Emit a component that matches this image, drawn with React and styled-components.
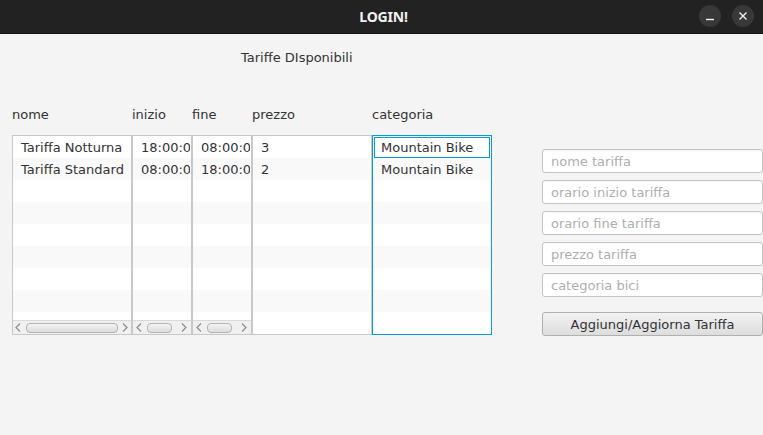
import React from 'react'
import styled, { createGlobalStyle } from 'styled-components'

const GlobalStyle = createGlobalStyle`
  html, body {
    margin: 0;
    padding: 0;
    background: #f4f4f4;
  }
  body {
    width: 763px;
    height: 435px;
    overflow: hidden;
    font-family: "DejaVu Sans", "Liberation Sans", sans-serif;
    font-size: 13px;
    color: #333333;
  }
`

const TitleBar = styled.div`
  position: relative;
  height: 33px;
  background: #222222;
  border-bottom: 1px solid #141414;
  display: flex;
  align-items: center;
  justify-content: center;
`

const TitleText = styled.div`
  color: #f2f2f2;
  font-family: "Noto Sans", "Liberation Sans", sans-serif;
  font-weight: 700;
  font-size: 14px;
  letter-spacing: -0.2px;
  margin-left: 4px;
`

const WinButtons = styled.div`
  position: absolute;
  right: 9px;
  top: 5px;
  display: flex;
  gap: 11px;
`

const WinButton = styled.div`
  width: 22px;
  height: 22px;
  border-radius: 50%;
  background: #383838;
  display: flex;
  align-items: center;
  justify-content: center;
`

const Content = styled.div`
  display: flex;
  padding-left: 12px;
`

const LeftPane = styled.div`
  width: 480px;
  display: flex;
  flex-direction: column;
`

const PaneTitle = styled.div`
  margin-top: 16px;
  padding-left: 229px;
  line-height: 16px;
`

const Columns = styled.div`
  display: flex;
  margin-top: 41px;
`

const Column = styled.div`
  width: ${p => p.$w}px;
  display: flex;
  flex-direction: column;
`

const Header = styled.div`
  line-height: 16px;
  height: 16px;
  margin-bottom: 12px;
`

const List = styled.div`
  height: 200px;
  box-sizing: border-box;
  background: #ffffff;
  border: 1px solid ${p => (p.$focused ? '#039ed3' : '#c8c8c8')};
  box-shadow: ${p => (p.$focused ? '0 0 0 1px rgba(3,158,211,0.35) inset' : 'none')};
  display: flex;
  flex-direction: column;
  overflow: hidden;
`

const Rows = styled.div`
  flex: 1;
  overflow: hidden;
  background: repeating-linear-gradient(
    to bottom,
    #ffffff 0px,
    #ffffff 22px,
    #f9f9f9 22px,
    #f9f9f9 44px
  );
`

const Cell = styled.div`
  box-sizing: border-box;
  white-space: nowrap;
  overflow: hidden;
  color: #333333;
  height: ${p => (p.$focused ? '21px' : '22px')};
  margin: ${p => (p.$focused ? '1px 1px 0 1px' : '0')};
  border: 1px solid ${p => (p.$focused ? '#039ed3' : 'transparent')};
  padding: ${p => (p.$focused ? '0 6px' : '1px 7px 0')};
  line-height: 19px;
`

const HScroll = styled.div`
  height: 14px;
  flex: none;
  border-top: 1px solid #dadada;
  background: #f0f0f0;
  display: flex;
  align-items: center;
  padding: 0 3px 0 2px;
  box-sizing: border-box;
`

const Arrow = styled.div`
  width: 8px;
  display: flex;
  align-items: center;
  justify-content: center;
`

const Track = styled.div`
  flex: 1;
  padding: 0 ${p => p.$pad}px 0 4px;
  display: flex;
`

const Thumb = styled.div`
  height: 10px;
  box-sizing: border-box;
  width: ${p => p.$w}px;
  border: 1px solid #b4b4b4;
  border-radius: 4px;
  background: linear-gradient(#f4f4f4, #dcdcdc);
`

const RightPane = styled.div`
  margin-left: 50px;
  padding-top: 115px;
  display: flex;
  flex-direction: column;
  gap: 7px;
`

const Field = styled.input`
  width: 221px;
  height: 24px;
  box-sizing: border-box;
  border: 1px solid #c4c4c4;
  border-radius: 3px;
  background: #ffffff;
  padding: 0 8px;
  font-family: "DejaVu Sans", "Liberation Sans", sans-serif;
  font-size: 13px;
  color: #333333;
  outline: none;
  box-shadow: inset 0 1px 1px rgba(0, 0, 0, 0.04);
  &::placeholder {
    color: #aeaeae;
  }
`

const ActionButton = styled.button`
  margin-top: 8px;
  width: 221px;
  height: 24px;
  box-sizing: border-box;
  border: 1px solid #b0b0b0;
  border-radius: 3px;
  background: linear-gradient(#f2f2f2, #dddddd);
  font-family: "DejaVu Sans", "Liberation Sans", sans-serif;
  font-size: 13px;
  color: #333333;
  padding: 0;
`

const Chevron = ({ left }) => (
  <svg width="6" height="9" viewBox="0 0 6 9">
    <path
      d={left ? 'M5 0.5 L1 4.5 L5 8.5' : 'M1 0.5 L5 4.5 L1 8.5'}
      stroke="#8c8c8c"
      strokeWidth="1.2"
      fill="none"
    />
  </svg>
)

const ScrollBar = ({ thumb, pad }) => (
  <HScroll>
    <Arrow><Chevron left /></Arrow>
    <Track $pad={pad}>
      <Thumb $w={thumb} />
    </Track>
    <Arrow><Chevron /></Arrow>
  </HScroll>
)

const columns = [
  { key: 'nome', w: 120, values: ['Tariffa Notturna', 'Tariffa Standard'], scroll: { thumb: 92, pad: 4 } },
  { key: 'inizio', w: 60, values: ['18:00:00', '08:00:00'], scroll: { thumb: 25, pad: 0 } },
  { key: 'fine', w: 60, values: ['08:00:00', '18:00:00'], scroll: { thumb: 25, pad: 0 } },
  { key: 'prezzo', w: 120, values: ['3', '2'] },
  { key: 'categoria', w: 120, values: ['Mountain Bike', 'Mountain Bike'], focused: true },
]

const fields = ['nome tariffa', 'orario inizio tariffa', 'orario fine tariffa', 'prezzo tariffa', 'categoria bici']

export default function App() {
  return (
    <>
      <GlobalStyle />
      <TitleBar>
        <TitleText>LOGIN!</TitleText>
        <WinButtons>
          <WinButton>
            <svg width="10" height="10" viewBox="0 0 10 10">
              <path d="M1 8.5 H9" stroke="#f0f0f0" strokeWidth="1.4" />
            </svg>
          </WinButton>
          <WinButton>
            <svg width="10" height="10" viewBox="0 0 10 10">
              <path d="M1.5 1.5 L8.5 8.5 M8.5 1.5 L1.5 8.5" stroke="#f0f0f0" strokeWidth="1.4" />
            </svg>
          </WinButton>
        </WinButtons>
      </TitleBar>
      <Content>
        <LeftPane>
          <PaneTitle>Tariffe DIsponibili</PaneTitle>
          <Columns>
            {columns.map(col => (
              <Column key={col.key} $w={col.w}>
                <Header>{col.key}</Header>
                <List $focused={col.focused}>
                  <Rows>
                    {col.values.map((v, i) => (
                      <Cell key={i} $focused={col.focused && i === 0}>{v}</Cell>
                    ))}
                  </Rows>
                  {col.scroll && <ScrollBar thumb={col.scroll.thumb} pad={col.scroll.pad} />}
                </List>
              </Column>
            ))}
          </Columns>
        </LeftPane>
        <RightPane>
          {fields.map(f => (
            <Field key={f} placeholder={f} readOnly />
          ))}
          <ActionButton>Aggiungi/Aggiorna Tariffa</ActionButton>
        </RightPane>
      </Content>
    </>
  )
}
